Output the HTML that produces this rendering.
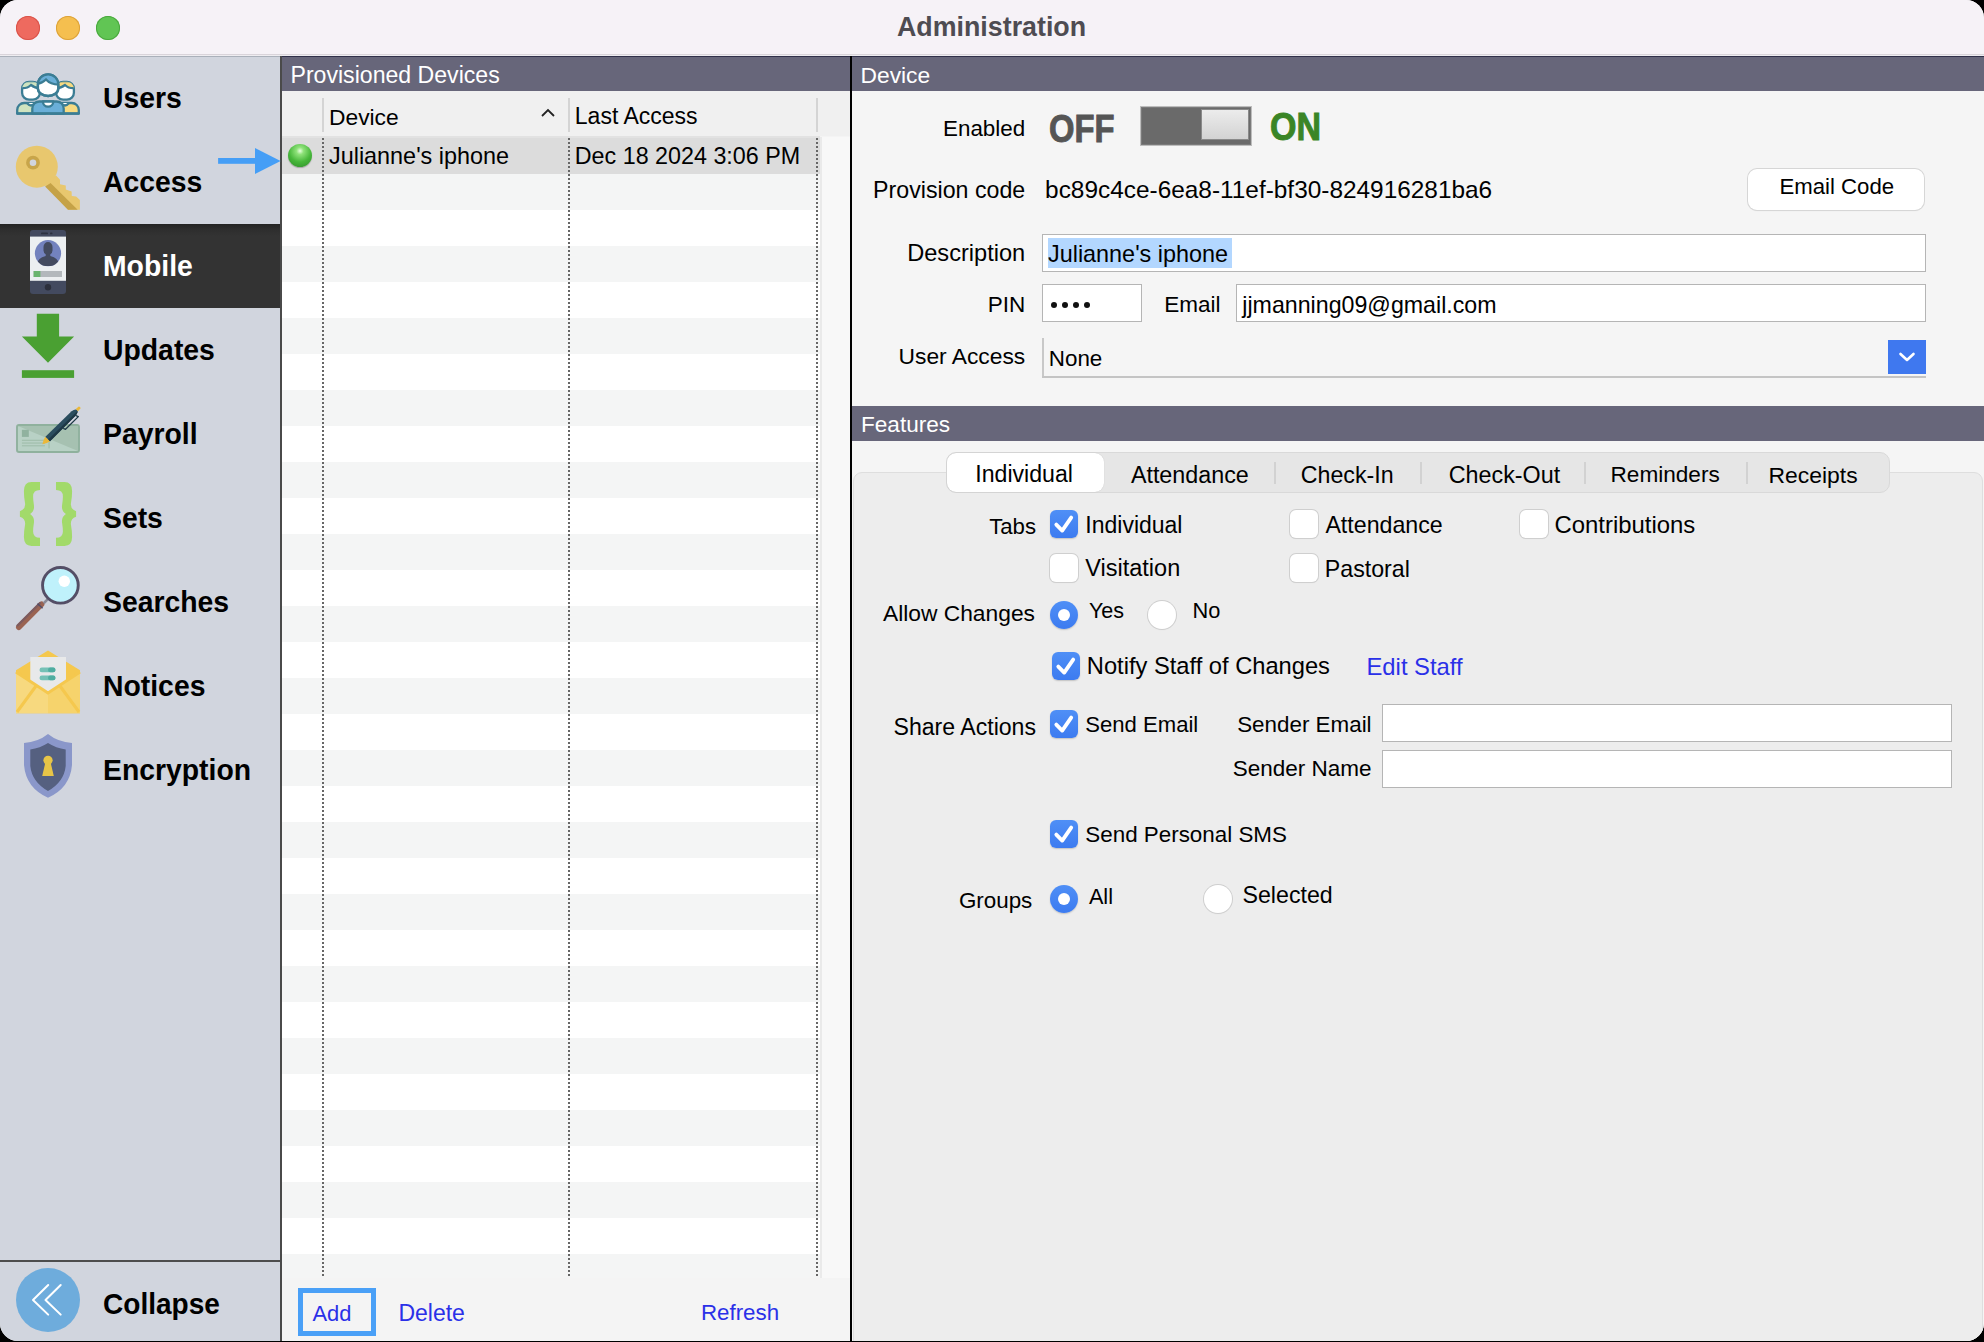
<!DOCTYPE html>
<html><head><meta charset="utf-8"><title>Administration</title>
<style>
html,body{margin:0;padding:0;background:#000;width:1984px;height:1342px;overflow:hidden;}
#win{position:absolute;left:0;top:0;width:1984px;height:1341px;overflow:hidden;border-radius:18px;background:#f5f5f5;font-family:"Liberation Sans", sans-serif;}
.t{position:absolute;white-space:nowrap;font-family:"Liberation Sans", sans-serif;}
svg{overflow:visible}
</style></head><body><div id="win">
<div style="position:absolute;left:0px;top:0px;width:1984px;height:54px;background:#f6f2f7;"></div><div style="position:absolute;left:0px;top:54px;width:1984px;height:1px;background:#d9d4da;"></div><div style="position:absolute;left:0px;top:55px;width:1984px;height:1px;background:#efedf1;"></div><div style="position:absolute;left:16px;top:16px;width:24px;height:24px;background:#ee6a5f;border-radius:50%;box-shadow:inset 0 0 0 1px #d9534a;"></div><div style="position:absolute;left:56px;top:16px;width:24px;height:24px;background:#f5bf4f;border-radius:50%;box-shadow:inset 0 0 0 1px #dca23a;"></div><div style="position:absolute;left:96px;top:16px;width:24px;height:24px;background:#61c554;border-radius:50%;box-shadow:inset 0 0 0 1px #4aa83e;"></div><div class="t" style="left:896.9px;top:13.1px;font-size:28px;line-height:28px;color:#4e4c52;font-weight:700;transform:scaleX(0.957);transform-origin:left;">Administration</div><div style="position:absolute;left:0px;top:56px;width:280px;height:1286px;background:#d1d5de;"></div><div style="position:absolute;left:0px;top:56px;width:280px;height:1px;background:#aab0ba;"></div><div style="position:absolute;left:280px;top:56px;width:2px;height:1286px;background:#4a4a4a;"></div><div style="position:absolute;left:0px;top:224px;width:280px;height:84px;background:linear-gradient(#232323 0,#2e2e2e 6px,#333 12px);"></div><div class="t" style="left:102.5px;top:83.3px;font-size:30px;line-height:30px;color:#000;font-weight:700;transform:scaleX(0.945);transform-origin:left;">Users</div><div class="t" style="left:102.5px;top:167.3px;font-size:30px;line-height:30px;color:#000;font-weight:700;transform:scaleX(0.945);transform-origin:left;">Access</div><div class="t" style="left:102.5px;top:251.3px;font-size:30px;line-height:30px;color:#fff;font-weight:700;transform:scaleX(0.945);transform-origin:left;">Mobile</div><div class="t" style="left:102.5px;top:335.3px;font-size:30px;line-height:30px;color:#000;font-weight:700;transform:scaleX(0.945);transform-origin:left;">Updates</div><div class="t" style="left:102.5px;top:419.3px;font-size:30px;line-height:30px;color:#000;font-weight:700;transform:scaleX(0.945);transform-origin:left;">Payroll</div><div class="t" style="left:102.5px;top:503.3px;font-size:30px;line-height:30px;color:#000;font-weight:700;transform:scaleX(0.945);transform-origin:left;">Sets</div><div class="t" style="left:102.5px;top:587.3px;font-size:30px;line-height:30px;color:#000;font-weight:700;transform:scaleX(0.945);transform-origin:left;">Searches</div><div class="t" style="left:102.5px;top:671.3px;font-size:30px;line-height:30px;color:#000;font-weight:700;transform:scaleX(0.945);transform-origin:left;">Notices</div><div class="t" style="left:102.5px;top:755.3px;font-size:30px;line-height:30px;color:#000;font-weight:700;transform:scaleX(0.945);transform-origin:left;">Encryption</div><div style="position:absolute;left:0px;top:1260px;width:280px;height:2px;background:#4d4d4d;"></div><div style="position:absolute;left:16px;top:1268px;width:64px;height:64px;background:#6eacdc;border-radius:50%;"></div><svg style="position:absolute;left:16px;top:1268px" width="64" height="64" viewBox="0 0 64 64"><polyline points="32.2,17 17,32 32.2,46.6" fill="none" stroke="#fff" stroke-width="2" stroke-linecap="round" stroke-linejoin="round"/><polyline points="44.7,17 29.5,32 44.7,46.6" fill="none" stroke="#fff" stroke-width="2" stroke-linecap="round" stroke-linejoin="round"/></svg><div class="t" style="left:102.5px;top:1288.9px;font-size:30px;line-height:30px;color:#000;font-weight:700;transform:scaleX(0.935);transform-origin:left;">Collapse</div><div style="position:absolute;left:282px;top:56px;width:568px;height:1286px;background:#f4f4f4;"></div><div style="position:absolute;left:282px;top:56px;width:568px;height:35px;background:#67667a;"></div><div style="position:absolute;left:282px;top:56px;width:568px;height:1px;background:#30304a;"></div><div class="t" style="left:290.5px;top:63.6px;font-size:23.1px;line-height:23.1px;color:#fff;font-weight:400;">Provisioned Devices</div><div style="position:absolute;left:282px;top:91px;width:568px;height:45px;background:#f0f0f0;"></div><div style="position:absolute;left:282px;top:136px;width:538px;height:2px;background:#e2e2e2;"></div><div style="position:absolute;left:322px;top:98px;width:2px;height:34px;background:#d4d4d4;"></div><div style="position:absolute;left:568px;top:98px;width:2px;height:34px;background:#d4d4d4;"></div><div style="position:absolute;left:816px;top:98px;width:2px;height:34px;background:#d4d4d4;"></div><div class="t" style="left:329.0px;top:106.0px;font-size:22.8px;line-height:22.8px;color:#000;font-weight:400;">Device</div><svg style="position:absolute;left:540px;top:108px" width="16" height="10" viewBox="0 0 16 10"><polyline points="2,8 8,2 14,8" fill="none" stroke="#222" stroke-width="1.8"/></svg><div class="t" style="left:574.8px;top:105.4px;font-size:23.0px;line-height:23.0px;color:#000;font-weight:400;">Last Access</div><div style="position:absolute;left:282px;top:138px;width:538px;height:36px;background:#dcdcdc;"></div><div style="position:absolute;left:282px;top:174px;width:538px;height:36px;background:#f4f5f5;"></div><div style="position:absolute;left:282px;top:210px;width:538px;height:36px;background:#ffffff;"></div><div style="position:absolute;left:282px;top:246px;width:538px;height:36px;background:#f4f5f5;"></div><div style="position:absolute;left:282px;top:282px;width:538px;height:36px;background:#ffffff;"></div><div style="position:absolute;left:282px;top:318px;width:538px;height:36px;background:#f4f5f5;"></div><div style="position:absolute;left:282px;top:354px;width:538px;height:36px;background:#ffffff;"></div><div style="position:absolute;left:282px;top:390px;width:538px;height:36px;background:#f4f5f5;"></div><div style="position:absolute;left:282px;top:426px;width:538px;height:36px;background:#ffffff;"></div><div style="position:absolute;left:282px;top:462px;width:538px;height:36px;background:#f4f5f5;"></div><div style="position:absolute;left:282px;top:498px;width:538px;height:36px;background:#ffffff;"></div><div style="position:absolute;left:282px;top:534px;width:538px;height:36px;background:#f4f5f5;"></div><div style="position:absolute;left:282px;top:570px;width:538px;height:36px;background:#ffffff;"></div><div style="position:absolute;left:282px;top:606px;width:538px;height:36px;background:#f4f5f5;"></div><div style="position:absolute;left:282px;top:642px;width:538px;height:36px;background:#ffffff;"></div><div style="position:absolute;left:282px;top:678px;width:538px;height:36px;background:#f4f5f5;"></div><div style="position:absolute;left:282px;top:714px;width:538px;height:36px;background:#ffffff;"></div><div style="position:absolute;left:282px;top:750px;width:538px;height:36px;background:#f4f5f5;"></div><div style="position:absolute;left:282px;top:786px;width:538px;height:36px;background:#ffffff;"></div><div style="position:absolute;left:282px;top:822px;width:538px;height:36px;background:#f4f5f5;"></div><div style="position:absolute;left:282px;top:858px;width:538px;height:36px;background:#ffffff;"></div><div style="position:absolute;left:282px;top:894px;width:538px;height:36px;background:#f4f5f5;"></div><div style="position:absolute;left:282px;top:930px;width:538px;height:36px;background:#ffffff;"></div><div style="position:absolute;left:282px;top:966px;width:538px;height:36px;background:#f4f5f5;"></div><div style="position:absolute;left:282px;top:1002px;width:538px;height:36px;background:#ffffff;"></div><div style="position:absolute;left:282px;top:1038px;width:538px;height:36px;background:#f4f5f5;"></div><div style="position:absolute;left:282px;top:1074px;width:538px;height:36px;background:#ffffff;"></div><div style="position:absolute;left:282px;top:1110px;width:538px;height:36px;background:#f4f5f5;"></div><div style="position:absolute;left:282px;top:1146px;width:538px;height:36px;background:#ffffff;"></div><div style="position:absolute;left:282px;top:1182px;width:538px;height:36px;background:#f4f5f5;"></div><div style="position:absolute;left:282px;top:1218px;width:538px;height:36px;background:#ffffff;"></div><div style="position:absolute;left:282px;top:1254px;width:538px;height:24px;background:#f4f5f5;"></div><div style="position:absolute;left:820px;top:137px;width:30px;height:1141px;background:#f8f8f8;"></div><div style="position:absolute;left:820px;top:137px;width:2px;height:1141px;background:#eaeaea;"></div><div style="position:absolute;left:322px;top:138px;width:2px;height:1140px;background:repeating-linear-gradient(to bottom,#666 0 2px,transparent 2px 4px);"></div><div style="position:absolute;left:568px;top:138px;width:2px;height:1140px;background:repeating-linear-gradient(to bottom,#666 0 2px,transparent 2px 4px);"></div><div style="position:absolute;left:816px;top:138px;width:2px;height:1140px;background:repeating-linear-gradient(to bottom,#666 0 2px,transparent 2px 4px);"></div><div style="position:absolute;left:288px;top:144px;width:24px;height:23px;border-radius:50%;background:radial-gradient(circle at 50% 30%, #e9ffe0 0, #8fe27a 18%, #47b73a 55%, #2f8a2a 100%);box-shadow:0 1px 1px rgba(0,0,0,.25);"></div><div class="t" style="left:329.0px;top:144.8px;font-size:23.4px;line-height:23.4px;color:#000;font-weight:400;">Julianne's iphone</div><div class="t" style="left:574.8px;top:145.3px;font-size:23.3px;line-height:23.3px;color:#000;font-weight:400;">Dec 18 2024 3:06 PM</div><svg style="position:absolute;left:216px;top:146px" width="66" height="30" viewBox="0 0 66 30"><rect x="2.1" y="12" width="37" height="5.8" fill="#459ef6"/><polygon points="39,1.9 64.6,15 39,27.9" fill="#459ef6"/></svg><div style="position:absolute;left:298px;top:1288px;width:78px;height:48px;border:5px solid #4aa0f7;box-sizing:border-box;"></div><div class="t" style="left:312.5px;top:1302.5px;font-size:21.9px;line-height:21.9px;color:#2a30e8;font-weight:400;">Add</div><div class="t" style="left:398.4px;top:1301.5px;font-size:23.0px;line-height:23.0px;color:#2a30e8;font-weight:400;">Delete</div><div class="t" style="left:701.0px;top:1302.1px;font-size:22.3px;line-height:22.3px;color:#2a30e8;font-weight:400;">Refresh</div><div style="position:absolute;left:850px;top:56px;width:2px;height:1286px;background:#000;"></div><div style="position:absolute;left:852px;top:56px;width:1132px;height:1286px;background:#f5f5f5;"></div><div style="position:absolute;left:852px;top:56px;width:1132px;height:35px;background:#67667a;"></div><div style="position:absolute;left:852px;top:56px;width:1132px;height:1px;background:#30304a;"></div><div class="t" style="left:860.5px;top:63.9px;font-size:22.8px;line-height:22.8px;color:#fff;font-weight:400;">Device</div><div class="t" style="right:958.8px;top:118.0px;font-size:22.4px;line-height:22.4px;color:#000;font-weight:400;">Enabled</div><div class="t" style="left:1049.4px;top:109.9px;font-size:38.5px;line-height:38.5px;color:#555555;font-weight:700;transform:scaleX(0.851);transform-origin:left;-webkit-text-stroke:1px #555555;">OFF</div><div style="position:absolute;left:1140px;top:106px;width:112px;height:40px;background:#6a6a6a;border:1px solid #bdbdbd;box-sizing:border-box;box-shadow:inset 0 0 0 1px #7a7a7a;"></div><div style="position:absolute;left:1201px;top:109px;width:48px;height:31px;background:linear-gradient(#ececec,#d3d3d3);border:1px solid #8a8a8a;box-sizing:border-box;"></div><div class="t" style="left:1269.5px;top:108.1px;font-size:38px;line-height:38px;color:#3a8526;font-weight:700;transform:scaleX(0.895);transform-origin:left;-webkit-text-stroke:1px #3a8526;">ON</div><div class="t" style="right:958.8px;top:179.1px;font-size:23.2px;line-height:23.2px;color:#000;font-weight:400;">Provision code</div><div class="t" style="left:1045.1px;top:178.1px;font-size:24.4px;line-height:24.4px;color:#000;font-weight:400;">bc89c4ce-6ea8-11ef-bf30-824916281ba6</div><div style="position:absolute;left:1748px;top:169px;width:176px;height:41px;background:#fff;border-radius:9px;box-shadow:0 0 0 1px #d6d6d6, 0 1px 1px rgba(0,0,0,.12);"></div><div class="t" style="left:1779.4px;top:176.2px;font-size:22.2px;line-height:22.2px;color:#000;font-weight:400;">Email Code</div><div class="t" style="right:958.8px;top:242.3px;font-size:23.6px;line-height:23.6px;color:#000;font-weight:400;">Description</div><div style="position:absolute;left:1042px;top:234px;width:884px;height:38px;background:#fff;border:1px solid #b5b5b5;box-sizing:border-box;"></div><div style="position:absolute;left:1048px;top:238px;width:184px;height:30px;background:#b3d7ff;"></div><div class="t" style="left:1048.0px;top:242.5px;font-size:23.4px;line-height:23.4px;color:#000;font-weight:400;">Julianne's iphone</div><div class="t" style="right:958.8px;top:294.3px;font-size:22.5px;line-height:22.5px;color:#000;font-weight:400;">PIN</div><div style="position:absolute;left:1042px;top:284px;width:100px;height:38px;background:#fff;border:1px solid #b5b5b5;box-sizing:border-box;"></div><div style="position:absolute;left:1050.5px;top:302px;width:6px;height:6px;background:#111;border-radius:50%;"></div><div style="position:absolute;left:1061.7px;top:302px;width:6px;height:6px;background:#111;border-radius:50%;"></div><div style="position:absolute;left:1072.9px;top:302px;width:6px;height:6px;background:#111;border-radius:50%;"></div><div style="position:absolute;left:1084.1px;top:302px;width:6px;height:6px;background:#111;border-radius:50%;"></div><div class="t" style="right:763.6px;top:294.3px;font-size:22.5px;line-height:22.5px;color:#000;font-weight:400;">Email</div><div style="position:absolute;left:1236px;top:284px;width:690px;height:38px;background:#fff;border:1px solid #b5b5b5;box-sizing:border-box;"></div><div class="t" style="left:1242.3px;top:293.7px;font-size:23.2px;line-height:23.2px;color:#000;font-weight:400;">jjmanning09@gmail.com</div><div class="t" style="right:958.8px;top:345.3px;font-size:22.8px;line-height:22.8px;color:#000;font-weight:400;">User Access</div><div style="position:absolute;left:1042px;top:338px;width:2px;height:40px;background:#c8c8c8;"></div><div style="position:absolute;left:1042px;top:376px;width:884px;height:2px;background:#c4c4c4;"></div><div class="t" style="left:1048.8px;top:348.0px;font-size:22.4px;line-height:22.4px;color:#000;font-weight:400;">None</div><div style="position:absolute;left:1888px;top:340px;width:38px;height:34px;background:#3f78ef;"></div><svg style="position:absolute;left:1888px;top:340px" width="38" height="34" viewBox="0 0 38 34"><polyline points="12.5,14 19,20 25.5,14" fill="none" stroke="#fff" stroke-width="2.6" stroke-linecap="round" stroke-linejoin="round"/></svg><div style="position:absolute;left:852px;top:406px;width:1132px;height:35px;background:#67667a;"></div><div class="t" style="left:861.0px;top:413.8px;font-size:22.6px;line-height:22.6px;color:#fff;font-weight:400;">Features</div><div style="position:absolute;left:853px;top:472px;width:1130px;height:900px;background:#ededed;border:1px solid #dedede;border-radius:9px;box-sizing:border-box;"></div><div style="position:absolute;left:946px;top:452px;width:944px;height:41px;background:#e6e6e6;border:1px solid #d9d9d9;border-radius:10px;box-sizing:border-box;"></div><div style="position:absolute;left:947px;top:453px;width:157px;height:39px;background:#fff;border-radius:9px;box-shadow:0 0 1px rgba(0,0,0,.2);"></div><div style="position:absolute;left:1274px;top:462px;width:2px;height:22px;background:#d2d2d2;"></div><div style="position:absolute;left:1420px;top:462px;width:2px;height:22px;background:#d2d2d2;"></div><div style="position:absolute;left:1584px;top:462px;width:2px;height:22px;background:#d2d2d2;"></div><div style="position:absolute;left:1746px;top:462px;width:2px;height:22px;background:#d2d2d2;"></div><div class="t" style="left:975.3px;top:463.0px;font-size:23.1px;line-height:23.1px;color:#000;font-weight:400;">Individual</div><div class="t" style="left:1130.9px;top:463.7px;font-size:23.3px;line-height:23.3px;color:#000;font-weight:400;">Attendance</div><div class="t" style="left:1300.8px;top:463.8px;font-size:23.2px;line-height:23.2px;color:#000;font-weight:400;">Check-In</div><div class="t" style="left:1448.8px;top:463.7px;font-size:23.3px;line-height:23.3px;color:#000;font-weight:400;">Check-Out</div><div class="t" style="left:1610.5px;top:464.3px;font-size:22.6px;line-height:22.6px;color:#000;font-weight:400;">Reminders</div><div class="t" style="left:1768.6px;top:464.0px;font-size:22.9px;line-height:22.9px;color:#000;font-weight:400;">Receipts</div><div class="t" style="right:948.0px;top:515.9px;font-size:22.2px;line-height:22.2px;color:#000;font-weight:400;">Tabs</div><div style="position:absolute;left:1050px;top:510px;width:28px;height:28px;background:linear-gradient(#4f8ff6,#3c7bf0);border-radius:6px;box-shadow:0 1px 1.5px rgba(0,0,0,.18);"></div><svg style="position:absolute;left:1050px;top:510px" width="28" height="28" viewBox="0 0 28 28"><polyline points="6.3,14.6 12.2,20.6 21.2,7.6" fill="none" stroke="#fff" stroke-width="3.8" stroke-linecap="round" stroke-linejoin="round"/></svg><div class="t" style="left:1085.3px;top:513.6px;font-size:23.0px;line-height:23.0px;color:#000;font-weight:400;">Individual</div><div style="position:absolute;left:1290px;top:510px;width:28px;height:28px;background:#fff;border-radius:6px;box-shadow:0 0 0 1px #cfcfcf, 0 1px 1px rgba(0,0,0,.1);"></div><div class="t" style="left:1325.4px;top:513.5px;font-size:23.2px;line-height:23.2px;color:#000;font-weight:400;">Attendance</div><div style="position:absolute;left:1520px;top:510px;width:28px;height:28px;background:#fff;border-radius:6px;box-shadow:0 0 0 1px #cfcfcf, 0 1px 1px rgba(0,0,0,.1);"></div><div class="t" style="left:1554.5px;top:512.9px;font-size:23.9px;line-height:23.9px;color:#000;font-weight:400;">Contributions</div><div style="position:absolute;left:1050px;top:554px;width:28px;height:28px;background:#fff;border-radius:6px;box-shadow:0 0 0 1px #cfcfcf, 0 1px 1px rgba(0,0,0,.1);"></div><div class="t" style="left:1085.3px;top:557.4px;font-size:23.5px;line-height:23.5px;color:#000;font-weight:400;">Visitation</div><div style="position:absolute;left:1290px;top:554px;width:28px;height:28px;background:#fff;border-radius:6px;box-shadow:0 0 0 1px #cfcfcf, 0 1px 1px rgba(0,0,0,.1);"></div><div class="t" style="left:1324.8px;top:557.7px;font-size:23.2px;line-height:23.2px;color:#000;font-weight:400;">Pastoral</div><div class="t" style="right:949.0px;top:601.8px;font-size:22.8px;line-height:22.8px;color:#000;font-weight:400;">Allow Changes</div><div style="position:absolute;left:1049.8px;top:600.7px;width:28px;height:28px;background:linear-gradient(#4f8ff6,#3c7bf0);border-radius:50%;box-shadow:0 1px 1.5px rgba(0,0,0,.18);"></div><div style="position:absolute;left:1057.6px;top:608.5px;width:12.4px;height:12.4px;background:#fff;border-radius:50%;"></div><div class="t" style="left:1088.9px;top:600.5px;font-size:21.5px;line-height:21.5px;color:#000;font-weight:400;">Yes</div><div style="position:absolute;left:1148px;top:600.7px;width:28px;height:28px;background:#fff;border-radius:50%;box-shadow:0 0 0 1px #cfcfcf, 0 1px 1px rgba(0,0,0,.1);"></div><div class="t" style="left:1192.6px;top:600.2px;font-size:21.8px;line-height:21.8px;color:#000;font-weight:400;">No</div><div style="position:absolute;left:1052px;top:652px;width:28px;height:28px;background:linear-gradient(#4f8ff6,#3c7bf0);border-radius:6px;box-shadow:0 1px 1.5px rgba(0,0,0,.18);"></div><svg style="position:absolute;left:1052px;top:652px" width="28" height="28" viewBox="0 0 28 28"><polyline points="6.3,14.6 12.2,20.6 21.2,7.6" fill="none" stroke="#fff" stroke-width="3.8" stroke-linecap="round" stroke-linejoin="round"/></svg><div class="t" style="left:1086.8px;top:655.2px;font-size:23.7px;line-height:23.7px;color:#000;font-weight:400;">Notify Staff of Changes</div><div class="t" style="left:1366.5px;top:655.2px;font-size:23.8px;line-height:23.8px;color:#2a30e8;font-weight:400;">Edit Staff</div><div class="t" style="right:948.0px;top:715.8px;font-size:23.1px;line-height:23.1px;color:#000;font-weight:400;">Share Actions</div><div style="position:absolute;left:1050px;top:710px;width:28px;height:28px;background:linear-gradient(#4f8ff6,#3c7bf0);border-radius:6px;box-shadow:0 1px 1.5px rgba(0,0,0,.18);"></div><svg style="position:absolute;left:1050px;top:710px" width="28" height="28" viewBox="0 0 28 28"><polyline points="6.3,14.6 12.2,20.6 21.2,7.6" fill="none" stroke="#fff" stroke-width="3.8" stroke-linecap="round" stroke-linejoin="round"/></svg><div class="t" style="left:1085.3px;top:714.3px;font-size:22.1px;line-height:22.1px;color:#000;font-weight:400;">Send Email</div><div class="t" style="right:612.4px;top:714.0px;font-size:22.4px;line-height:22.4px;color:#000;font-weight:400;">Sender Email</div><div class="t" style="right:612.4px;top:758.2px;font-size:22.5px;line-height:22.5px;color:#000;font-weight:400;">Sender Name</div><div style="position:absolute;left:1382px;top:704px;width:570px;height:38px;background:#fff;border:1px solid #b5b5b5;box-sizing:border-box;"></div><div style="position:absolute;left:1382px;top:750px;width:570px;height:38px;background:#fff;border:1px solid #b5b5b5;box-sizing:border-box;"></div><div style="position:absolute;left:1050px;top:820px;width:28px;height:28px;background:linear-gradient(#4f8ff6,#3c7bf0);border-radius:6px;box-shadow:0 1px 1.5px rgba(0,0,0,.18);"></div><svg style="position:absolute;left:1050px;top:820px" width="28" height="28" viewBox="0 0 28 28"><polyline points="6.3,14.6 12.2,20.6 21.2,7.6" fill="none" stroke="#fff" stroke-width="3.8" stroke-linecap="round" stroke-linejoin="round"/></svg><div class="t" style="left:1085.3px;top:824.4px;font-size:22.4px;line-height:22.4px;color:#000;font-weight:400;">Send Personal SMS</div><div class="t" style="right:951.7px;top:890.3px;font-size:22.4px;line-height:22.4px;color:#000;font-weight:400;">Groups</div><div style="position:absolute;left:1049.8px;top:885.2px;width:28px;height:28px;background:linear-gradient(#4f8ff6,#3c7bf0);border-radius:50%;box-shadow:0 1px 1.5px rgba(0,0,0,.18);"></div><div style="position:absolute;left:1057.6px;top:893.0px;width:12.4px;height:12.4px;background:#fff;border-radius:50%;"></div><div class="t" style="left:1088.9px;top:885.5px;font-size:21.7px;line-height:21.7px;color:#000;font-weight:400;">All</div><div style="position:absolute;left:1204px;top:885.2px;width:28px;height:28px;background:#fff;border-radius:50%;box-shadow:0 0 0 1px #cfcfcf, 0 1px 1px rgba(0,0,0,.1);"></div><div class="t" style="left:1242.5px;top:884.3px;font-size:23.2px;line-height:23.2px;color:#000;font-weight:400;">Selected</div><svg style="position:absolute;left:12px;top:68px" width="72" height="52" viewBox="12 68 72 52">
<defs>
<clipPath id="chL"><rect x="22.1" y="81.8" width="17.8" height="17.9" rx="7"/></clipPath>
<clipPath id="chR"><rect x="56.1" y="81.8" width="17.8" height="17.9" rx="7"/></clipPath>
<clipPath id="chC"><path d="M37.9 84.5 A10.2 10.2 0 0 1 58.3 84.5 V88.5 A10.2 7.5 0 0 1 37.9 88.5 Z"/></clipPath>
</defs>
<g stroke="#3b7d94" stroke-width="2.3" stroke-linejoin="round">
 <path d="M17.2 113.6 V110 a7 7 0 0 1 7 -7 h14 a7 7 0 0 1 7 7 v3.6 z" fill="#cfe3bf"/>
 <path d="M78.8 113.6 V110 a7 7 0 0 0 -7 -7 h-14 a7 7 0 0 0 -7 7 v3.6 z" fill="#f7da80"/>
 <path d="M27 103 q4 5 8 0" fill="#fff"/>
 <path d="M61 103 q4 5 8 0" fill="#fff"/>
 <rect x="22.1" y="81.8" width="17.8" height="17.9" rx="7" fill="#fff"/>
 <rect x="56.1" y="81.8" width="17.8" height="17.9" rx="7" fill="#fff"/>
</g>
<g clip-path="url(#chL)"><path d="M20 81 H42 V88 Q36 89 31 85 Q27 89 20 88 Z" fill="#cfe3bf" stroke="#3b7d94" stroke-width="2.3"/></g>
<g clip-path="url(#chR)"><path d="M54 81 H76 V88 Q69 89 65 85 Q60 89 54 88 Z" fill="#f7da80" stroke="#3b7d94" stroke-width="2.3"/></g>
<g stroke="#3b7d94" stroke-width="2.3" stroke-linejoin="round">
 <path d="M32.3 113.6 V108.5 a7 7 0 0 1 7 -7 h17.4 a7 7 0 0 1 7 7 V113.6 z" fill="#6aafd8"/>
 <path d="M42.9 101.5 a5.2 5.2 0 0 0 10.4 0 z" fill="#fff"/>
 <path d="M37.9 84.5 A10.2 10.2 0 0 1 58.3 84.5 V88.5 A10.2 7.5 0 0 1 37.9 88.5 Z" fill="#fff"/>
</g>
<g clip-path="url(#chC)"><path d="M36 72 H60 V84.5 Q51 85 46 79.5 Q42 83.5 36 84 Z" fill="#6aafd8" stroke="#3b7d94" stroke-width="2.3"/></g>
<path d="M37.9 84.5 A10.2 10.2 0 0 1 58.3 84.5 V88.5 A10.2 7.5 0 0 1 37.9 88.5 Z" fill="none" stroke="#3b7d94" stroke-width="2.3"/>
<rect x="16.1" y="112.3" width="63.8" height="2.4" rx="1" fill="#3b7d94"/>
</svg><svg style="position:absolute;left:10px;top:140px" width="76" height="76" viewBox="10 140 76 76">
<polygon points="44,184 56.1,175.5 60,179.8 60,184.2 65.8,185.6 65.8,189.6 71.6,191.5 71.8,195.9 76.1,196.4 79.9,199.9 79.9,209.7 68,209.7" fill="#e8c76e"/>
<polygon points="45.1,186.5 50.5,183 77.7,209.7 68,209.7" fill="#c5a247"/>
<circle cx="36.8" cy="166.7" r="21" fill="#e8c76e"/>
<circle cx="33" cy="162.7" r="6.9" fill="#c8a54a"/>
<circle cx="33" cy="162.7" r="3.3" fill="#d1d5de"/>
</svg><svg style="position:absolute;left:26px;top:226px" width="44" height="72" viewBox="26 226 44 72">
<rect x="30" y="230" width="36" height="64" rx="3" fill="#434a5f"/>
<rect x="30" y="236.6" width="36" height="44.2" fill="#eceff1"/>
<rect x="41" y="232.5" width="7" height="1.8" rx="0.9" fill="#2c3140"/>
<rect x="50" y="232.5" width="2.5" height="1.8" rx="0.9" fill="#2c3140"/>
<circle cx="48" cy="253.2" r="13.1" fill="#7382be"/>
<clipPath id="avc"><circle cx="48" cy="253.2" r="13.1"/></clipPath>
<g clip-path="url(#avc)" fill="#434a5f">
 <path d="M43.5 247 a4.5 5 0 0 1 9 0 v3.5 a4.5 4.5 0 0 1 -2.2 3.8 v1.7 q8 1.5 10 10 h-24.6 q2 -8.5 10 -10 v-1.7 a4.5 4.5 0 0 1 -2.2 -3.8z"/>
</g>
<rect x="33.6" y="271" width="28.4" height="6" fill="#b3b8bc"/>
<rect x="33.6" y="271" width="6.8" height="6" fill="#6ab46e"/>
<circle cx="48" cy="287.2" r="3.2" fill="#2c2f3b"/>
</svg><svg style="position:absolute;left:18px;top:310px" width="60" height="72" viewBox="18 310 60 72">
<polygon points="36.8,313.8 59.1,313.8 59.1,336.4 74.1,336.4 48,362.7 21.9,336.4 36.8,336.4" fill="#4aa032"/>
<rect x="21.9" y="370.2" width="52.2" height="7.7" fill="#4aa032"/>
</svg><svg style="position:absolute;left:12px;top:400px" width="72" height="58" viewBox="12 400 72 58">
<rect x="17" y="425" width="62" height="27" rx="2" fill="#b8d1c5" stroke="#8fb19d" stroke-width="1.9"/>
<polygon points="18,426 78,426 78,451" fill="#a6c1b1"/>
<rect x="21.9" y="429.8" width="6.9" height="7.1" fill="#90b29f"/>
<rect x="21.9" y="439.7" width="23" height="1.3" fill="#a3c0ae"/>
<rect x="21.9" y="442.4" width="23" height="1.3" fill="#a3c0ae"/>
<rect x="21.9" y="445.1" width="23" height="1.3" fill="#a3c0ae"/>
<rect x="48.3" y="428.4" width="1.5" height="20" fill="#a5c2b0"/>
<g transform="translate(42.4,444.3) rotate(-44.7)">
 <path d="M0 0 Q3 -2.6 7.5 -3.3 L7.5 3.3 Q3 2.6 0 0 Z" fill="#eab83a"/>
 <path d="M7.5 -3.3 L44 -3.0 Q48 -2.5 49 0 Q48 2.5 44 3.0 L7.5 3.3 Z" fill="#2a4d5e"/>
 <path d="M7.5 0.8 L44 1 Q47 1.5 48.5 0.8 Q48 2.5 44 3.0 L7.5 3.3 Z" fill="#1d3845"/>
 <path d="M48.5 -1.6 L52.5 -1.3 Q53.5 0 52.5 1.3 L48.5 1.6 Z" fill="#eab83a"/>
 <path d="M44 3.2 L45 5.6 L27 5.6 L26 3.3" fill="none" stroke="#1d3845" stroke-width="1.3" stroke-linejoin="round"/>
</g>
</svg><svg style="position:absolute;left:16px;top:478px" width="64" height="72" viewBox="16 478 64 72">
<path d="M40 482 L40 490.1 Q33.1 490.1 33.1 496.5 Q33.1 500 33.9 505 Q34.8 511 30.1 514 Q34.8 517 33.9 523 Q33.1 528 33.1 531.5 Q33.1 537.8 40 537.8 L40 545.9 L31.5 545.9 Q24 545.9 23.9 537 Q23.9 531 25 525 Q26 519 19.9 516.8 L19.9 511.2 Q26 509 25 503 Q23.9 497 23.9 491 Q24 482 31.5 482 Z" fill="#a2da6a"/>
<g transform="translate(96,0) scale(-1,1)"><path d="M40 482 L40 490.1 Q33.1 490.1 33.1 496.5 Q33.1 500 33.9 505 Q34.8 511 30.1 514 Q34.8 517 33.9 523 Q33.1 528 33.1 531.5 Q33.1 537.8 40 537.8 L40 545.9 L31.5 545.9 Q24 545.9 23.9 537 Q23.9 531 25 525 Q26 519 19.9 516.8 L19.9 511.2 Q26 509 25 503 Q23.9 497 23.9 491 Q24 482 31.5 482 Z" fill="#a2da6a"/></g>
</svg><svg style="position:absolute;left:12px;top:560px" width="74" height="72" viewBox="12 560 74 72">
<line x1="18.8" y1="627.2" x2="41.6" y2="604.2" stroke="#9a6352" stroke-width="5.6" stroke-linecap="round"/>
<line x1="17.5" y1="625.5" x2="40" y2="603" stroke="#7d5b5e" stroke-width="2.4" stroke-linecap="round"/>
<line x1="37.5" y1="603.6" x2="42.6" y2="608.2" stroke="#544e66" stroke-width="1.5"/>
<line x1="43.7" y1="603.2" x2="47.6" y2="599.4" stroke="#8a8a96" stroke-width="2.6"/>
<circle cx="60.4" cy="585.3" r="17.85" fill="#bff1fb" stroke="#544e66" stroke-width="2.9"/>
<circle cx="64.3" cy="581.3" r="5.7" fill="#fff"/>
</svg><svg style="position:absolute;left:12px;top:646px" width="72" height="72" viewBox="12 646 72 72">
<polygon points="16,670.2 48,650.6 80,670.2 80,713.2 16,713.2" fill="#f5c84e"/>
<rect x="30.3" y="657" width="35.7" height="36" fill="#e8e9ea"/>
<rect x="39.5" y="667.5" width="16" height="4.8" rx="2.4" fill="#75c1b6"/>
<rect x="48" y="667.5" width="7.5" height="4.8" rx="2.4" fill="#4fada0"/>
<rect x="39.5" y="675.5" width="16" height="4.8" rx="2.4" fill="#75c1b6"/>
<rect x="48" y="675.5" width="7.5" height="4.8" rx="2.4" fill="#4fada0"/>
<polygon points="16,672 48,693 48,713.2 16,713.2" fill="#f7d97f"/>
<polygon points="80,672 48,693 48,713.2 80,713.2" fill="#f6d36c"/>
<path d="M16 672 L48 693 L80 672" fill="none" stroke="#f5c84e" stroke-width="3"/>
<path d="M17 712 L36 686 M79 712 L60 686" stroke="#f5c84e" stroke-width="3"/>
</svg><svg style="position:absolute;left:20px;top:730px" width="56" height="72" viewBox="20 730 56 72">
<path d="M48 734 Q38 742 24 743 L24 765 Q26 788 48 797.7 Q70 788 72 765 L72 743 Q58 742 48 734 Z" fill="#8a97ca"/>
<path d="M48 743 Q40 748 30.3 749.5 L30.3 766 Q32 782 48 791 Q64 782 65.7 766 L65.7 749.5 Q56 748 48 743 Z" fill="#556080"/>
<circle cx="48" cy="760.3" r="4.6" fill="#e8c547"/>
<polygon points="45.5,762 50.5,762 53.8,776 42.2,776" fill="#e8c547"/>
</svg><div style="position:absolute;left:0px;top:1341px;width:1984px;height:1px;background:#000;"></div>
</div></body></html>
